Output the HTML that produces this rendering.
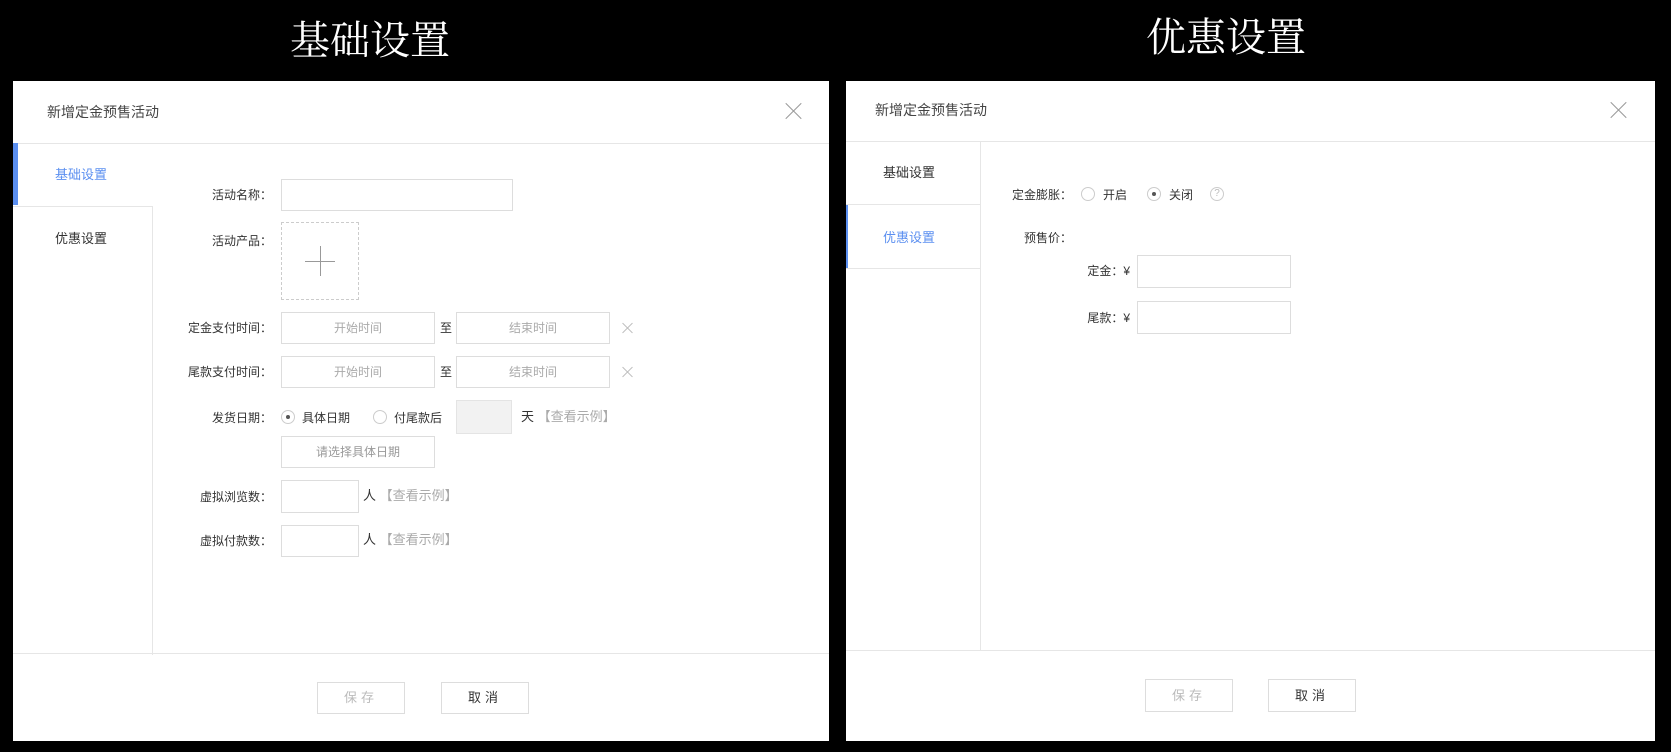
<!DOCTYPE html>
<html><head><meta charset="utf-8"><style>
*{margin:0;padding:0;box-sizing:border-box}
body{width:1671px;height:752px;background:#000;position:relative;overflow:hidden;font-family:"Liberation Sans","Noto Sans CJK SC",sans-serif;font-size:12px;color:#333}
.a{position:absolute}
.big{color:#fff;font-family:"Liberation Serif","Noto Serif CJK SC",serif;font-size:40px;line-height:40px;white-space:nowrap}
.panel{position:absolute;background:#fff}
.hl{position:absolute;height:1px;background:#e6e6e6}
.vl{position:absolute;width:1px;background:#e6e6e6}
.in{position:absolute;border:1px solid #ddd;background:#fff;color:#aaa;text-align:center;font-size:12px}
.lab{position:absolute;text-align:right;width:150px;line-height:14px;white-space:nowrap}
.t{position:absolute;white-space:nowrap;line-height:14px}
.rad{position:absolute;width:14px;height:14px;border:1px solid #ccc;border-radius:50%}
.rad.on::after{content:"";position:absolute;left:4px;top:4px;width:4px;height:4px;border-radius:50%;background:#555}
.btn{position:absolute;border:1px solid #ddd;text-align:center;font-size:13px;letter-spacing:4px}
.x{position:absolute;width:18px;height:18px}
.x::before,.x::after{content:"";position:absolute;left:8px;top:-2px;width:1px;height:22px;background:#999;transform:rotate(45deg)}
.x::after{transform:rotate(-45deg)}
.sx::before,.sx::after{background:#bbb;height:14px;top:2px}
</style></head><body>
<div class="a big" style="left:290px;top:21px">基础设置</div>
<div class="a big" style="left:1146px;top:18px">优惠设置</div>

<div class="panel" style="left:13px;top:81px;width:816px;height:660px"></div>
<div class="t" style="left:47px;top:105px;font-size:14px;color:#444">新增定金预售活动</div>
<div class="x" style="left:785px;top:102px"></div>
<div class="hl" style="left:13px;top:143px;width:816px"></div>
<div class="a" style="left:13px;top:143px;width:5px;height:62px;background:#5b8ff0"></div>
<div class="t" style="left:55px;top:168px;color:#5b8ff0;font-size:13px">基础设置</div>
<div class="hl" style="left:13px;top:206px;width:140px"></div>
<div class="vl" style="left:152px;top:206px;height:449px"></div>
<div class="t" style="left:55px;top:232px;font-size:13px">优惠设置</div>
<div class="hl" style="left:13px;top:653px;width:816px"></div>

<div class="lab" style="left:122px;top:188px">活动名称：</div>
<div class="in" style="left:281px;top:179px;width:232px;height:32px"></div>
<div class="lab" style="left:122px;top:234px">活动产品：</div>
<div class="a" style="left:281px;top:222px;width:78px;height:78px;border:1px dashed #ccc"></div>
<div class="a" style="left:305px;top:261px;width:30px;height:1px;background:#999"></div>
<div class="a" style="left:320px;top:246px;width:1px;height:30px;background:#999"></div>

<div class="lab" style="left:122px;top:321px">定金支付时间：</div>
<div class="in" style="left:281px;top:312px;width:154px;height:32px;line-height:30px">开始时间</div>
<div class="t" style="left:440px;top:321px">至</div>
<div class="in" style="left:456px;top:312px;width:154px;height:32px;line-height:30px">结束时间</div>
<div class="x sx" style="left:619px;top:319px"></div>

<div class="lab" style="left:122px;top:365px">尾款支付时间：</div>
<div class="in" style="left:281px;top:356px;width:154px;height:32px;line-height:30px">开始时间</div>
<div class="t" style="left:440px;top:365px">至</div>
<div class="in" style="left:456px;top:356px;width:154px;height:32px;line-height:30px">结束时间</div>
<div class="x sx" style="left:619px;top:363px"></div>

<div class="lab" style="left:122px;top:411px">发货日期：</div>
<div class="rad on" style="left:281px;top:410px"></div>
<div class="t" style="left:302px;top:411px">具体日期</div>
<div class="rad" style="left:373px;top:410px"></div>
<div class="t" style="left:394px;top:411px">付尾款后</div>
<div class="a" style="left:456px;top:400px;width:56px;height:34px;background:#f2f2f2;border:1px solid #e4e4e4"></div>
<div class="t" style="left:521px;top:410px;font-size:13px">天 <span style="color:#aaa">【查看示例】</span></div>
<div class="in" style="left:281px;top:436px;width:154px;height:32px;line-height:30px;color:#999">请选择具体日期</div>

<div class="lab" style="left:122px;top:490px">虚拟浏览数：</div>
<div class="in" style="left:281px;top:480px;width:78px;height:33px"></div>
<div class="t" style="left:363px;top:489px;font-size:13px">人 <span style="color:#aaa">【查看示例】</span></div>
<div class="lab" style="left:122px;top:534px">虚拟付款数：</div>
<div class="in" style="left:281px;top:525px;width:78px;height:32px"></div>
<div class="t" style="left:363px;top:533px;font-size:13px">人 <span style="color:#aaa">【查看示例】</span></div>

<div class="btn" style="left:317px;top:682px;width:88px;height:32px;line-height:30px;color:#bbb">保存</div>
<div class="btn" style="left:441px;top:682px;width:88px;height:32px;line-height:30px;color:#333">取消</div>

<div class="panel" style="left:846px;top:81px;width:809px;height:660px"></div>
<div class="t" style="left:875px;top:103px;font-size:14px;color:#444">新增定金预售活动</div>
<div class="x" style="left:1610px;top:101px"></div>
<div class="hl" style="left:846px;top:141px;width:809px"></div>
<div class="vl" style="left:980px;top:141px;height:510px"></div>
<div class="t" style="left:883px;top:166px;font-size:13px">基础设置</div>
<div class="hl" style="left:846px;top:204px;width:134px"></div>
<div class="a" style="left:846px;top:205px;width:2px;height:63px;background:#5b8ff0"></div>
<div class="t" style="left:883px;top:231px;font-size:13px;color:#5b8ff0">优惠设置</div>
<div class="hl" style="left:846px;top:268px;width:134px"></div>
<div class="hl" style="left:846px;top:650px;width:809px"></div>

<div class="lab" style="left:922px;top:188px">定金膨胀：</div>
<div class="rad" style="left:1081px;top:187px"></div>
<div class="t" style="left:1103px;top:188px">开启</div>
<div class="rad on" style="left:1147px;top:187px"></div>
<div class="t" style="left:1169px;top:188px">关闭</div>
<div class="a" style="left:1210px;top:187px;width:14px;height:14px;border:1px solid #ccc;border-radius:50%;color:#bbb;font-size:10px;text-align:center;line-height:12px">?</div>
<div class="lab" style="left:922px;top:231px">预售价：</div>
<div class="lab" style="left:980px;top:264px">定金：¥</div>
<div class="in" style="left:1137px;top:255px;width:154px;height:33px"></div>
<div class="lab" style="left:980px;top:311px">尾款：¥</div>
<div class="in" style="left:1137px;top:301px;width:154px;height:33px"></div>

<div class="btn" style="left:1145px;top:679px;width:88px;height:33px;line-height:31px;color:#bbb">保存</div>
<div class="btn" style="left:1268px;top:679px;width:88px;height:33px;line-height:31px;color:#333">取消</div>
</body></html>
